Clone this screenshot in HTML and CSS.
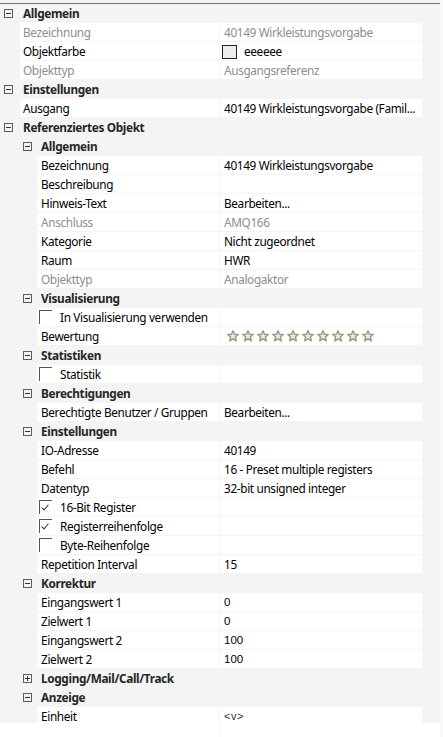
FILE: index.html
```html
<!DOCTYPE html>
<html lang="de">

<head>
    <meta charset="UTF-8">
    <meta name="viewport" content="width=device-width, initial-scale=1.0">
    <title>Eigenschaften</title>
    <link rel="stylesheet" href="styles.css">
</head>

<body>
    <div class="grid">
        <div class="topline"></div>

        <div class="grp l0"><span class="exp minus"></span><span class="cap">Allgemein</span></div>
        <div class="prop l0 dis"><div class="name">Bezeichnung</div><div class="val">40149 Wirkleistungsvorgabe</div></div>
        <div class="prop l0"><div class="name">Objektfarbe</div><div class="val"><span class="swatch"></span>eeeeee</div></div>
        <div class="prop l0 dis"><div class="name">Objekttyp</div><div class="val">Ausgangsreferenz</div></div>

        <div class="grp l0"><span class="exp minus"></span><span class="cap">Einstellungen</span></div>
        <div class="prop l0"><div class="name">Ausgang</div><div class="val">40149 Wirkleistungsvorgabe (Famil...</div></div>

        <div class="grp l0"><span class="exp minus"></span><span class="cap">Referenziertes Objekt</span></div>

        <div class="grp l1"><span class="exp minus"></span><span class="cap">Allgemein</span></div>
        <div class="prop l1"><div class="name">Bezeichnung</div><div class="val">40149 Wirkleistungsvorgabe</div></div>
        <div class="prop l1"><div class="name">Beschreibung</div><div class="val"></div></div>
        <div class="prop l1"><div class="name">Hinweis-Text</div><div class="val">Bearbeiten...</div></div>
        <div class="prop l1 dis"><div class="name">Anschluss</div><div class="val">AMQ166</div></div>
        <div class="prop l1"><div class="name">Kategorie</div><div class="val">Nicht zugeordnet</div></div>
        <div class="prop l1"><div class="name">Raum</div><div class="val">HWR</div></div>
        <div class="prop l1 dis"><div class="name">Objekttyp</div><div class="val">Analogaktor</div></div>

        <div class="grp l1"><span class="exp minus"></span><span class="cap">Visualisierung</span></div>
        <div class="prop l1 chk"><div class="name"><span class="box"></span>In Visualisierung verwenden</div><div class="val"></div></div>
        <div class="prop l1"><div class="name">Bewertung</div><div class="val stars" id="stars"></div></div>

        <div class="grp l1"><span class="exp minus"></span><span class="cap">Statistiken</span></div>
        <div class="prop l1 chk"><div class="name"><span class="box"></span>Statistik</div><div class="val"></div></div>

        <div class="grp l1"><span class="exp minus"></span><span class="cap">Berechtigungen</span></div>
        <div class="prop l1"><div class="name">Berechtigte Benutzer / Gruppen</div><div class="val">Bearbeiten...</div></div>

        <div class="grp l1"><span class="exp minus"></span><span class="cap">Einstellungen</span></div>
        <div class="prop l1"><div class="name">IO-Adresse</div><div class="val">40149</div></div>
        <div class="prop l1"><div class="name">Befehl</div><div class="val">16 - Preset multiple registers</div></div>
        <div class="prop l1"><div class="name">Datentyp</div><div class="val">32-bit unsigned integer</div></div>
        <div class="prop l1 chk"><div class="name"><span class="box on"></span>16-Bit Register</div><div class="val"></div></div>
        <div class="prop l1 chk"><div class="name"><span class="box on"></span>Registerreihenfolge</div><div class="val"></div></div>
        <div class="prop l1 chk"><div class="name"><span class="box"></span>Byte-Reihenfolge</div><div class="val"></div></div>
        <div class="prop l1"><div class="name">Repetition Interval</div><div class="val">15</div></div>

        <div class="grp l1"><span class="exp minus"></span><span class="cap">Korrektur</span></div>
        <div class="prop l1"><div class="name">Eingangswert 1</div><div class="val num">0</div></div>
        <div class="prop l1"><div class="name">Zielwert 1</div><div class="val num">0</div></div>
        <div class="prop l1"><div class="name">Eingangswert 2</div><div class="val num">100</div></div>
        <div class="prop l1"><div class="name">Zielwert 2</div><div class="val num">100</div></div>

        <div class="grp l1"><span class="exp plus"></span><span class="cap">Logging/Mail/Call/Track</span></div>

        <div class="grp l1"><span class="exp minus"></span><span class="cap">Anzeige</span></div>
        <div class="prop l1"><div class="name">Einheit</div><div class="val small">&lt;v&gt;</div></div>

        <div class="prop l1 last"><div class="name"></div><div class="val"></div></div>
    </div>
    <script>
        // 10 leere Sterne fuer die Bewertung
        var star = '<svg class="star" width="12" height="12" viewBox="0 0 12 12">' +
            '<path d="M6 0.8 L7.5 4.2 L11.2 4.5 L8.4 7 L9.3 10.8 L6 8.8 L2.7 10.8 L3.6 7 L0.8 4.5 L4.5 4.2 Z" ' +
            'fill="#ece9e0" stroke="#9e9680" stroke-width="1.4" stroke-linejoin="round"/></svg>';
        var s = "";
        for (i = 0; i < 10; i++) {
            s = s + star;
        }
        document.getElementById("stars").innerHTML = s;
    </script>
</body>

</html>
```

FILE: styles.css
```css
body {
    margin: 0;
    background-color: #fafafa;
    font-family: "Noto Sans", "DejaVu Sans", sans-serif;
    font-size: 11.8px;
    letter-spacing: -0.35px;
    color: #000;
}

.grid {
    width: 440px;
    height: 737px;
    overflow: hidden;
    background-color: #f4f4f4;
}

.topline {
    height: 1px;
    margin-top: 3px;
    background-color: #6f6f6f;
}

.grp,
.prop {
    display: flex;
    align-items: center;
    height: 18px;
    margin-bottom: 1px;
    width: 422px;
    white-space: nowrap;
}

.grp .cap {
    font-weight: bold;
    color: #262626;
}

.grp.l0 {
    padding-left: 4px;
}

.grp.l0 .cap {
    margin-left: 10px;
}

.grp.l1 {
    padding-left: 23px;
}

.grp.l1 .cap {
    margin-left: 9px;
}

.exp {
    display: inline-block;
    position: relative;
    box-sizing: border-box;
    width: 9px;
    height: 9px;
    border: 1px solid #5c5c5c;
    flex: none;
}

.exp::before {
    content: "";
    position: absolute;
    left: 1px;
    top: 3px;
    width: 5px;
    height: 1px;
    background-color: #333;
}

.exp.plus::after {
    content: "";
    position: absolute;
    left: 3px;
    top: 1px;
    width: 1px;
    height: 5px;
    background-color: #333;
}

.prop .name {
    flex: 1;
    height: 18px;
    line-height: 18px;
    background-color: #fff;
    margin-right: 1px;
    overflow: hidden;
}

.prop .val {
    width: 198px;
    height: 18px;
    line-height: 18px;
    padding-left: 4px;
    background-color: #fff;
    overflow: hidden;
}

.prop.l0 .name {
    margin-left: 20px;
    padding-left: 3px;
}

.prop.l1 .name {
    margin-left: 37px;
    padding-left: 4px;
}

.prop.dis .name,
.prop.dis .val {
    color: #8d8d8d;
}

.prop.chk .name {
    display: flex;
    align-items: center;
    padding-left: 2px;
}

.box {
    display: inline-block;
    position: relative;
    box-sizing: border-box;
    width: 13px;
    height: 14px;
    border-top: 1px solid #555;
    border-left: 1px solid #555;
    margin-right: 8px;
    flex: none;
}

.box.on::after {
    content: "";
    position: absolute;
    left: 3px;
    top: 2px;
    width: 3px;
    height: 6px;
    border-right: 1px solid #333;
    border-bottom: 1px solid #333;
    transform: rotate(40deg);
}

.swatch {
    display: inline-block;
    box-sizing: border-box;
    width: 15px;
    height: 14px;
    border: 1px solid #222;
    background-color: #eeeeee;
    vertical-align: middle;
    margin: -2px 7px 0 -2px;
}

.stars {
    display: flex;
    align-items: center;
    gap: 3px;
    padding-left: 7px !important;
    width: 195px !important;
}

.star {
    display: block;
}

.num {
    font-family: "Liberation Sans", Arial, sans-serif;
    font-size: 11.5px;
    letter-spacing: 0;
}

.small {
    font-family: "Liberation Sans", Arial, sans-serif;
    font-size: 11px;
    letter-spacing: 0.5px;
    color: #333;
    padding-left: 5px !important;
}

.prop.last {
    width: 440px;
    height: 12px;
}

.prop.last .name {
    margin-left: 0;
}

.prop.last .val {
    width: 216px;
}
```
